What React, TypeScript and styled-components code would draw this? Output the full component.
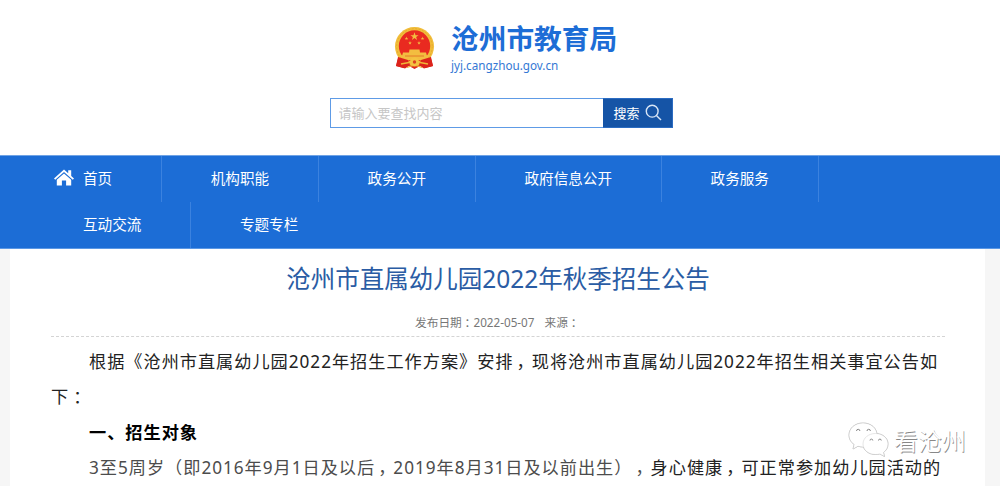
import React from 'react';
import styled, { createGlobalStyle } from 'styled-components';

const GlobalStyle = createGlobalStyle`
  * { box-sizing: border-box; }
  body {
    margin: 0;
    background: #fff;
    font-family: "Noto Sans", "Noto Sans CJK SC", sans-serif;
    text-spacing-trim: space-all;
    overflow: hidden;
  }
`;

const Page = styled.div`
  width: 1000px;
  height: 486px;
  overflow: hidden;
  position: relative;
  display: flex;
  flex-direction: column;
  background: #f6f6f6;
`;

const Header = styled.header`
  height: 155px;
  flex: none;
  background: #fff;
  padding-top: 20px;
  display: flex;
  flex-direction: column;
`;

const Brand = styled.div`
  display: flex;
  height: 78px;
  padding-left: 393px;
  gap: 15px;
`;

const Emblem = styled.svg`
  width: 43px;
  height: 43px;
  margin-top: 6px;
`;

const BrandText = styled.div`
  display: flex;
  flex-direction: column;
`;

const SiteName = styled.h1`
  margin: 0;
  font-size: 27.7px;
  line-height: 37px;
  font-weight: 700;
  color: #1d6dd6;
  white-space: nowrap;
`;

const Domain = styled.span`
  font-size: 11.7px;
  line-height: 17px;
  color: #3478d4;
`;

const SearchBar = styled.form`
  display: flex;
  width: 342.5px;
  height: 30px;
  margin-left: 330px;
`;

const SearchField = styled.input`
  flex: 1;
  min-width: 0;
  padding: 0 7.5px;
  border: 1px solid #5e9be6;
  border-right: 0;
  outline: 0;
  font-family: inherit;
  font-size: 13px;
  background: #fff;
  &::placeholder { color: #c6c6c6; opacity: 1; }
`;

const SearchButton = styled.button`
  width: 69.5px;
  padding: 0 0 2px 10.5px;
  border: 1px solid #2b6cc2;
  border-left: 0;
  background: #1554a6;
  color: #fff;
  font-family: inherit;
  font-size: 13px;
  display: flex;
  align-items: center;
  gap: 5px;
  white-space: nowrap;
`;

const Nav = styled.nav`
  flex: none;
  height: 94px;
  padding-left: 34px;
  background: #1c6dd6;
  border-top: 1px solid #6fa3e5;
  border-bottom: 1px solid #5b98e5;
`;

const NavRow = styled.div`
  display: flex;
  height: 46px;
`;

const NavItem = styled.a<{ $home?: boolean; $start?: boolean; $last?: boolean }>`
  display: flex;
  align-items: center;
  gap: 9px;
  padding: 0 49px 3px ${p => (p.$home ? 20 : p.$start ? 49 : 48.5)}px;
  border-right: 1px solid ${p => (p.$last ? 'transparent' : '#3b82df')};
  color: #fff;
  font-size: 14.6px;
  white-space: nowrap;
`;

const HomeIcon = styled.svg`
  width: 20px;
  height: 17px;
`;

const Article = styled.main`
  flex: 1;
  margin: 0 15px 0 10px;
  padding: 0 40px 0 41px;
  background: #fff;
`;

const Title = styled.h2`
  margin: 0;
  padding-top: 8px;
  height: 63px;
  font-size: 24.5px;
  line-height: 44px;
  font-weight: 400;
  text-align: center;
  color: #2a5ca4;
  white-space: nowrap;
`;

const Meta = styled.div`
  display: flex;
  gap: 10px;
  padding-left: 364px;
  height: 25px;
  font-size: 11.7px;
  line-height: 21px;
  color: #777;
  border-bottom: 1px dashed #d4d4d4;
`;

/* Sets the colon in the middle of its full-width cell. */
const Colon = styled.span`
  padding-left: 0.24em;
  letter-spacing: -0.24em;
`;

const Comma = styled.span`
  padding-left: 3px;
  letter-spacing: -2px;
`;

const Line = styled.p<{ $indent?: boolean; $bold?: boolean }>`
  margin: 0;
  padding-left: ${p => (p.$indent ? 38 : 0)}px;
  height: 35.4px;
  line-height: 49px;
  font-size: 17.2px;
  letter-spacing: 0.97px;
  font-weight: ${p => (p.$bold ? 700 : 400)};
  color: ${p => (p.$bold ? '#000' : '#222')};
  white-space: nowrap;
`;

const Soft = styled.span`
  color: #4c4c4c;
`;

const Watermark = styled.div`
  position: absolute;
  left: 848px;
  top: 421px;
  display: flex;
  gap: 5px;
  height: 38px;
  font-size: 24px;
  line-height: 40px;
  color: #fff;
  text-shadow: 0.8px 0.8px 0.5px #888;
`;

const WatermarkIcon = styled.svg`
  width: 41px;
  height: 37px;
  filter: drop-shadow(0.7px 0.7px 0.4px #999);
`;

const rows = [
  ['首页', '机构职能', '政务公开', '政府信息公开', '政务服务'],
  ['互动交流', '专题专栏'],
];

const STAR = 'M0-5 1.2-1.6 4.8-1.6 1.9.6 3 4 0 1.9-3 4-1.9.6-4.8-1.6-1.2-1.6Z';

function NationalEmblem() {
  return (
    <Emblem viewBox="0 0 43 43">
      <path d="M6 29 3 40 12 42.5 16 40 21.5 43 27 40 31 42.5 40 40 37 29Z" fill="#dd261c" />
      <circle cx="21.5" cy="20.5" r="19.5" fill="#f1bd39" />
      <circle cx="21.5" cy="20.5" r="17.8" fill="none" stroke="#e3a52c" strokeWidth=".8" strokeDasharray="2 1.5" />
      <circle cx="21.5" cy="20" r="15.7" fill="#e92a20" />
      <g fill="#f3bd40">
        <path d={STAR} transform="translate(21.5 10.5) scale(.85)" />
        <path d={STAR} transform="translate(13.5 12.5) scale(.38)" />
        <path d={STAR} transform="translate(29.5 12.5) scale(.38)" />
        <path d={STAR} transform="translate(17 17) scale(.38)" />
        <path d={STAR} transform="translate(26 17) scale(.38)" />
        <path d="M16.5 23.5H26.5L27 26.5H33L34 30H9L10 26.5H16Z" />
        <path d="M6 29.5H37L33 34H10Z" />
      </g>
      <path d="M12 30H31" stroke="#e06a24" strokeWidth=".8" />
      <path d="M5 31 15 34 17 39 11 42 3 40Z M38 31 28 34 26 39 32 42 40 40Z" fill="#dc231b" />
      <circle cx="21.5" cy="36" r="4.6" fill="#f4c342" />
      <circle cx="21.5" cy="36" r="1.7" fill="#dd4321" />
      <path d="M8 38 16 36.5M27 36.5 35 38M14 41.5 20 39.5M23 39.5 29 41.5" stroke="#f0b638" strokeWidth="1.3" />
    </Emblem>
  );
}

export default function App() {
  return (
    <>
      <GlobalStyle />
      <Page>
        <Header>
          <Brand>
            <NationalEmblem />
            <BrandText>
              <SiteName>沧州市教育局</SiteName>
              <Domain>jyj.cangzhou.gov.cn</Domain>
            </BrandText>
          </Brand>
          <SearchBar>
            <SearchField placeholder="请输入要查找内容" />
            <SearchButton type="button">
              搜索
              <svg width="17" height="17" viewBox="0 0 17 17" fill="none" stroke="#d9e6f6" strokeWidth="1.4">
                <circle cx="7.2" cy="7.2" r="5.9" />
                <path d="m11.4 11.4 4.6 4.6" />
              </svg>
            </SearchButton>
          </SearchBar>
        </Header>
        <Nav>
          {rows.map((row, i) => (
            <NavRow key={i}>
              {row.map((label, j) => (
                <NavItem
                  key={label}
                  $home={label === '首页'}
                  $start={j === 0}
                  $last={i === rows.length - 1 && j === row.length - 1}
                >
                  {label === '首页' && (
                    <HomeIcon viewBox="0 0 20 17" fill="#fff">
                      <path d="M10 .5 14.2 4.2V1.3H17.2V6.9L20 9.4 18.8 10.8 10 3.1 1.2 10.8 0 9.4Z" />
                      <path d="M10 4.4 17.2 10.7V16.6H12.1V11.5H7.9V16.6H2.8V10.7Z" />
                    </HomeIcon>
                  )}
                  {label}
                </NavItem>
              ))}
            </NavRow>
          ))}
        </Nav>
        <Article>
          <Title>沧州市直属幼儿园2022年秋季招生公告</Title>
          <Meta>
            <span>发布日期<Colon>：</Colon>2022-05-07</span>
            <span>来源<Colon>：</Colon></span>
          </Meta>
          <Line $indent>
            根据《沧州市直属幼儿园2022年招生工作方案》安排<Comma>，</Comma>现将沧州市直属幼儿园2022年招生相关事宜公告如
          </Line>
          <Line>下<Colon>：</Colon></Line>
          <Line $indent $bold>一、招生对象</Line>
          <Line $indent>
            <Soft>3至5周岁（即2016年9月1日及以后<Comma>，</Comma>2019年8月31日及以前出生）<Comma>，</Comma></Soft>
            身心健康<Comma>，</Comma>可正常参加幼儿园活动的
          </Line>
        </Article>
        <Watermark>
          <WatermarkIcon viewBox="0 0 41 37" fill="#fff" stroke="#ccc" strokeWidth=".5">
            <path d="M15 2C7 2 1 7.3 1 14.2c0 4 2 7 5.2 9.2L5 28l5-2.8c1.6.5 3.3.8 5 .8 8 0 14-5.2 14-12S23 2 15 2Z" />
            <path d="M27.5 12.5c-7 0-12.5 4.5-12.5 10.5s5.5 10.5 12.5 10.5c1.5 0 3-.2 4.3-.6L36.5 35.5l-1-4c2.8-2 4.5-5 4.5-8.5 0-6-5.500-10.5-12.5-10.5Z" />
            <g fill="none" stroke="#888" strokeWidth="1">
              <path d="M8.5 10a1.7 1.7 0 0 1 3.4 0M19 10a1.7 1.7 0 0 1 3.4 0M22 19.5a1.4 1.4 0 0 1 2.8 0M30.5 19.5a1.4 1.4 0 0 1 2.8 0" />
            </g>
          </WatermarkIcon>
          <span>看沧州</span>
        </Watermark>
      </Page>
    </>
  );
}
